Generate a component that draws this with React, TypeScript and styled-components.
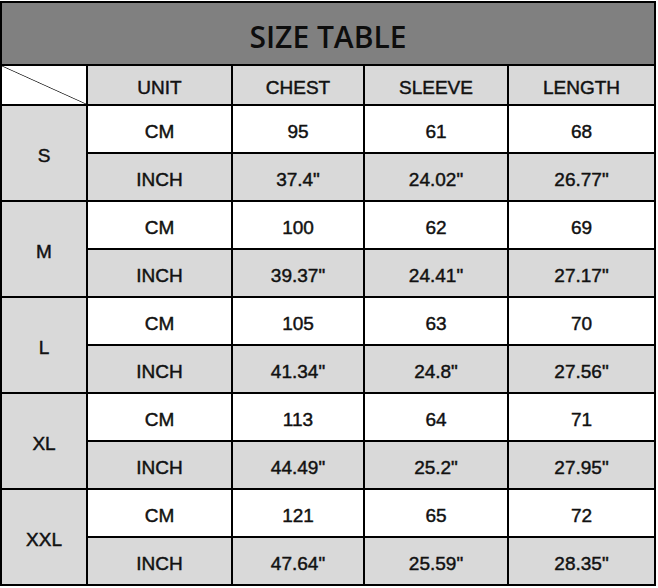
import styled, { createGlobalStyle } from 'styled-components';

type SizeRow = {
    size: string;
    cm: [string, string, string];
    inch: [string, string, string];
};

const sizes: SizeRow[] = [
    { size: 'S', cm: ['95', '61', '68'], inch: ['37.4"', '24.02"', '26.77"'] },
    { size: 'M', cm: ['100', '62', '69'], inch: ['39.37"', '24.41"', '27.17"'] },
    { size: 'L', cm: ['105', '63', '70'], inch: ['41.34"', '24.8"', '27.56"'] },
    { size: 'XL', cm: ['113', '64', '71'], inch: ['44.49"', '25.2"', '27.95"'] },
    { size: 'XXL', cm: ['121', '65', '72'], inch: ['47.64"', '25.59"', '28.35"'] },
];

const columns = [86, 145, 132, 144, 147];

const App: React.FC = () => {
    return (
        <>
            <GlobalStyle />
            <Page>
                <Table>
                    <colgroup>
                        {columns.map((w, i) => (
                            <col key={i} style={{ width: w }} />
                        ))}
                    </colgroup>
                    <tbody>
                        <tr>
                            <TitleCell colSpan={5}>SIZE TABLE</TitleCell>
                        </tr>
                        <HeaderRow>
                            <CornerCell />
                            <Cell $shade>UNIT</Cell>
                            <Cell $shade>CHEST</Cell>
                            <Cell $shade>SLEEVE</Cell>
                            <Cell $shade>LENGTH</Cell>
                        </HeaderRow>
                        {sizes.map((row) => (
                            <SizeGroup key={row.size} row={row} />
                        ))}
                    </tbody>
                </Table>
            </Page>
        </>
    );
};

const SizeGroup: React.FC<{ row: SizeRow }> = ({ row }) => (
    <>
        <BodyRow>
            <Cell $shade rowSpan={2}>
                {row.size}
            </Cell>
            <Cell>CM</Cell>
            {row.cm.map((v, i) => (
                <Cell key={i}>{v}</Cell>
            ))}
        </BodyRow>
        <BodyRow>
            <Cell $shade>INCH</Cell>
            {row.inch.map((v, i) => (
                <Cell $shade key={i}>
                    {v}
                </Cell>
            ))}
        </BodyRow>
    </>
);

export default App;

const GlobalStyle = createGlobalStyle`
    body {
        margin: 0;
        background: #ffffff;
    }
`;

const Page = styled.div`
    width: 658px;
    height: 588px;
    padding-top: 1px;
    box-sizing: border-box;
    background: #ffffff;
`;

const Table = styled.table`
    border-collapse: collapse;
    table-layout: fixed;
    width: 655px;
    font-family: 'Liberation Sans', Arial, sans-serif;
    color: #111111;
`;

const TitleCell = styled.td`
    height: 63px;
    padding: 6px 0 0;
    box-sizing: border-box;
    border: 2px solid #000;
    background: #808080;
    text-align: center;
    font-family: 'Open Sans', sans-serif;
    font-weight: 600;
    font-size: 30px;
    color: #0d0d0d;
`;

const HeaderRow = styled.tr`
    height: 40px;
`;

const BodyRow = styled.tr`
    height: 48px;
`;

const Cell = styled.td<{ $shade?: boolean }>`
    padding: 6px 0 0;
    border: 2px solid #000;
    background: ${({ $shade }) => ($shade ? '#d9d9d9' : '#ffffff')};
    text-align: center;
    font-size: 19px;
    -webkit-text-stroke: 0.45px #111;
`;

const CornerCell = styled.td`
    padding: 0;
    border: 2px solid #000;
    background: linear-gradient(
        to top right,
        #ffffff calc(50% - 0.8px),
        #333333 50%,
        #ffffff calc(50% + 0.8px)
    );
`;
